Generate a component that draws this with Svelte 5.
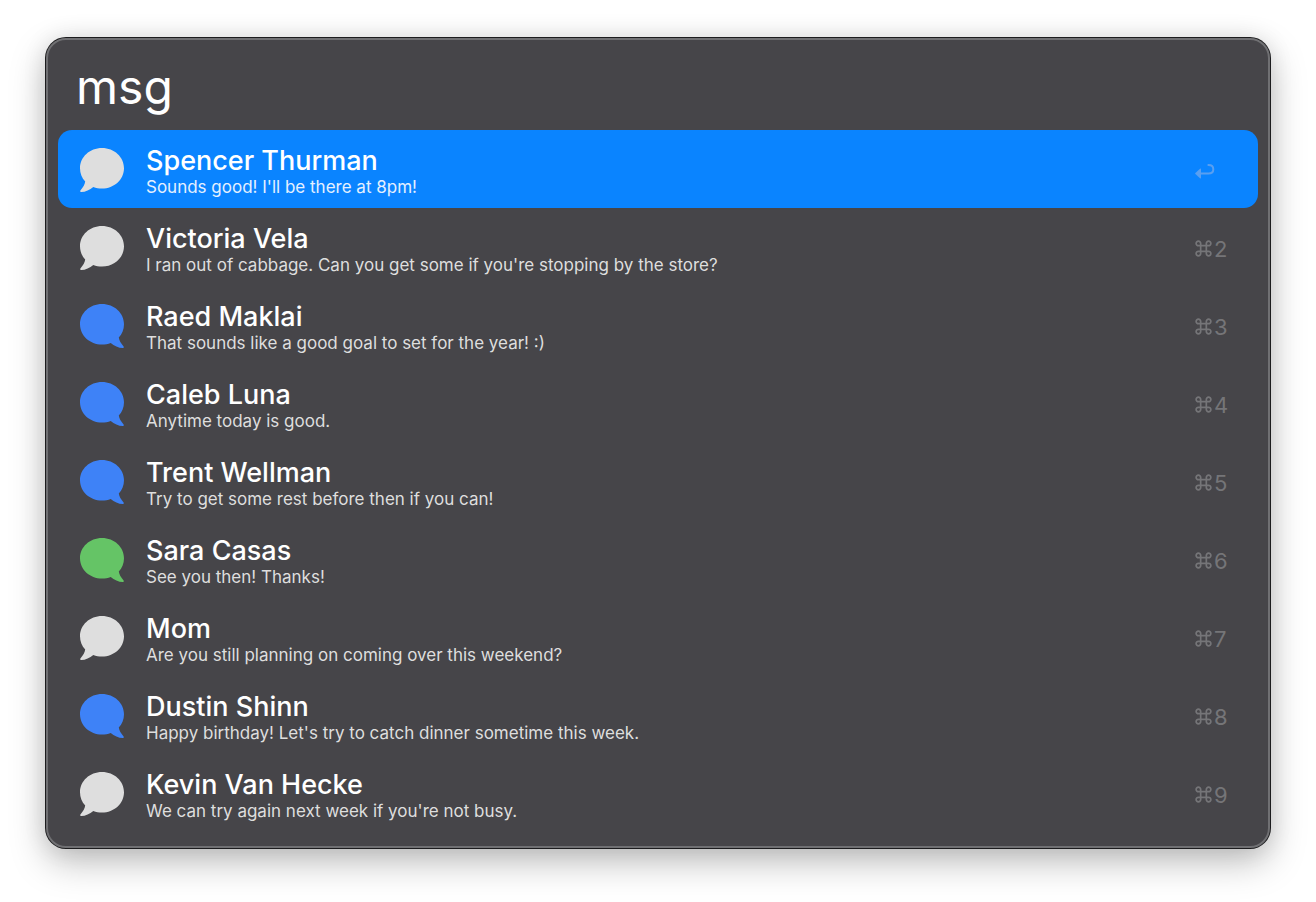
<script>
  let query = $state('msg');
  let selected = $state(0);

  const conversations = [
    { name: 'Spencer Thurman', text: "Sounds good! I'll be there at 8pm!", kind: 'received' },
    { name: 'Victoria Vela', text: "I ran out of cabbage. Can you get some if you're stopping by the store?", kind: 'received' },
    { name: 'Raed Maklai', text: 'That sounds like a good goal to set for the year! :)', kind: 'sent' },
    { name: 'Caleb Luna', text: 'Anytime today is good.', kind: 'sent' },
    { name: 'Trent Wellman', text: 'Try to get some rest before then if you can!', kind: 'sent' },
    { name: 'Sara Casas', text: 'See you then! Thanks!', kind: 'sms' },
    { name: 'Mom', text: 'Are you still planning on coming over this weekend?', kind: 'received' },
    { name: 'Dustin Shinn', text: "Happy birthday! Let's try to catch dinner sometime this week.", kind: 'sent' },
    { name: 'Kevin Van Hecke', text: "We can try again next week if you're not busy.", kind: 'received' }
  ];
</script>

<main>
  <section class="panel">
    <input class="search" type="text" aria-label="Search" bind:value={query} />
    <ul>
      {#each conversations as item, i}
        <li>
          <button class="row" class:selected={i === selected} onclick={() => (selected = i)}>
            <svg class="bubble {item.kind}" viewBox="0 0 44 44" aria-hidden="true">
              <path d="M22 0C34.2 0 44 9 44 20.3S34.2 40.6 22 40.6C18.900 40.6 16 40 13.300 38.900C9.800 41.800 5.600 43.900 1.200 44C0 44 -.2 43.100 .6 42.200C3 39.600 4.800 36.800 5.200 33.600C1.900 30 0 25.400 0 20.300C0 9 9.800 0 22 0Z" />
            </svg>
            <span class="copy">
              <span class="name">{item.name}</span>
              <span class="message">{item.text}</span>
            </span>
            <span class="key">
              {#if i === selected}
                <svg class="enter" viewBox="0 0 20 18" aria-hidden="true">
                  <path class="line" d="M5 10.500H13.500C16.600 10.500 18.300 8.700 18.300 6.200S16.600 1.900 13.400 1.900" />
                  <path class="head" d="M.4 9.900L5 5.800C5.500 5.400 6 5.600 6 6.200V14.800C6 15.400 5.500 15.600 5 15.200L.4 11.100C0 10.700 0 10.300 .4 9.900Z" />
                </svg>
              {:else}
                <svg class="command" viewBox="0 0 18 18" aria-hidden="true">
                  <path d="M6 6H12V12H6ZM6 6H3.700A2.400 2.400 0 1 1 6 3.600ZM12 6V3.600A2.400 2.400 0 1 1 14.300 6ZM12 12H14.300A2.400 2.400 0 1 1 12 14.400ZM6 12V14.400A2.400 2.400 0 1 1 3.700 12Z" />
                </svg>
                <span class="digit">{i + 1}</span>
              {/if}
            </span>
          </button>
        </li>
      {/each}
    </ul>
  </section>
</main>

<style>
  :global(body) {
    margin: 0;
    background: #fff;
  }
  main {
    padding: 38px 46px 54px;
    font-family: Inter, "Liberation Sans", sans-serif;
  }
  .panel {
    box-sizing: border-box;
    padding: 10px 10px 14px;
    border: 2px solid #707073;
    border-radius: 20px;
    background: #464549;
    box-shadow: 0 0 0 1px #1c1c1e, 0 14px 36px rgba(0, 0, 0, 0.26), 0 0 24px rgba(0, 0, 0, 0.1);
  }
  .search {
    box-sizing: border-box;
    display: block;
    width: 100%;
    height: 80px;
    margin: 0;
    padding: 0 18px 8px;
    border: 0;
    outline: 0;
    background: transparent;
    color: #fff;
    font: 400 48px/72px Inter, "Liberation Sans", sans-serif;
  }
  ul {
    margin: 0;
    padding: 0;
    list-style: none;
  }
  .row {
    box-sizing: border-box;
    display: flex;
    align-items: center;
    width: 100%;
    height: 78px;
    margin: 0;
    padding: 2px 30px 0 22px;
    border: 0;
    border-radius: 14px;
    background: transparent;
    color: #fff;
    font-family: inherit;
    text-align: left;
  }
  .row.selected {
    background: #0a84ff;
  }
  .bubble {
    flex: none;
    width: 44px;
    height: 44px;
    margin-right: 22px;
    fill: #dedede;
  }
  .sent,
  .sms {
    transform: scaleX(-1);
  }
  .sent {
    fill: #3e82f7;
  }
  .sms {
    fill: #65c466;
  }
  .copy {
    display: flex;
    flex: 1;
    flex-direction: column;
    min-width: 0;
    padding-top: 2px;
  }
  .name {
    font-size: 27px;
    font-weight: 500;
    line-height: 32px;
  }
  .message {
    color: #dedede;
    font-size: 17px;
    font-weight: 400;
    line-height: 20px;
  }
  .selected .message {
    color: #e4f0ff;
  }
  .key {
    display: flex;
    flex: none;
    align-items: center;
    gap: 2px;
    width: 33px;
    color: #757578;
    font-size: 22px;
    line-height: 26px;
  }
  .digit {
    padding-top: 2px;
  }
  .command {
    flex: none;
    width: 17px;
    height: 17px;
    fill: none;
    stroke: currentColor;
    stroke-width: 1.8;
  }
  .enter {
    width: 20px;
    height: 18px;
    margin-top: 4px;
  }
  .line {
    fill: none;
    stroke: #5a9ff0;
    stroke-width: 2;
    stroke-linecap: round;
  }
  .head {
    fill: #5a9ff0;
  }
</style>
